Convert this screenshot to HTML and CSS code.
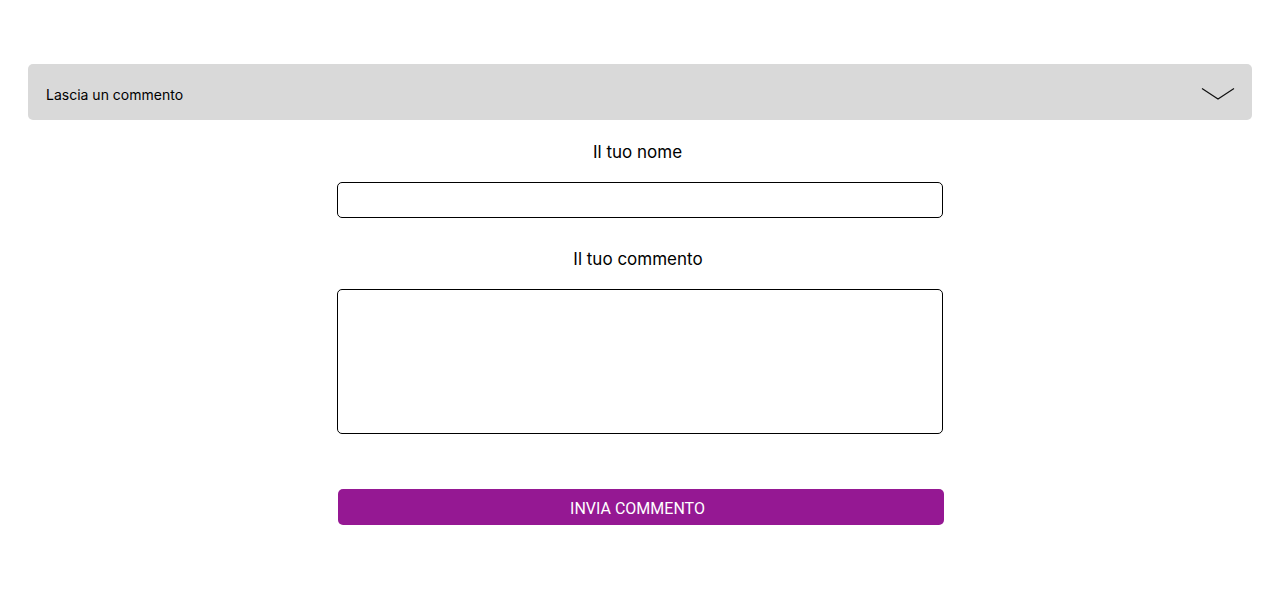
FILE: index.html
```html
<!DOCTYPE html>
<html lang="it">
<head>
<meta charset="utf-8">
<title>Lascia un commento</title>
<link rel="stylesheet" href="styles.css">
</head>
<body>
<main class="page">
  <div class="accordion">
    <span class="accordion-title">Lascia un commento</span>
    <svg class="chevron" width="34" height="14" viewBox="0 0 34 14" aria-hidden="true">
      <polyline points="1,1.5 17,12 33,1.5" fill="none" stroke="#111" stroke-width="1.2"/>
    </svg>
  </div>
  <form class="comment-form">
    <label class="field-label" for="nome">Il tuo nome</label>
    <input class="field-input" id="nome" type="text">
    <label class="field-label label-comment" for="commento">Il tuo commento</label>
    <textarea class="field-textarea" id="commento"></textarea>
    <button class="submit" type="button">INVIA COMMENTO</button>
  </form>
</main>
</body>
</html>
```
FILE: styles.css
```css
* { box-sizing: border-box; }
html, body { margin: 0; padding: 0; background: #fff; }
body { font-family: Inter, "Noto Sans", sans-serif; color: #000; }
.page { padding: 64px 28px 0; }
.accordion {
  height: 56px;
  background: #d9d9d9;
  border-radius: 5px;
  display: flex;
  align-items: center;
  justify-content: space-between;
  padding: 0 17px 0 18px;
}
.accordion-title { font-size: 14px; padding-top: 4px; }
.chevron { display: block; margin-top: 3px; }
.comment-form {
  width: 606px;
  margin: 0 auto;
  display: flex;
  flex-direction: column;
  align-items: stretch;
  padding-top: 22px;
}
.field-label {
  font-size: 17px;
  text-align: center;
  line-height: 20px;
  display: block;
  margin-bottom: 20px;
  padding-right: 5px;
}
.label-comment { margin-top: 31px; padding-right: 4px; }
.field-input {
  height: 36px;
  border: 1px solid #000;
  border-radius: 5px;
  font: inherit;
  background: #fff;
  padding: 0 8px;
}
.field-textarea {
  height: 145px;
  border: 1px solid #000;
  border-radius: 5px;
  font: inherit;
  resize: none;
  background: #fff;
  padding: 8px;
}
.submit {
  margin: 55px 0 0 1px;
  height: 36px;
  width: 606px;
  background: #951893;
  color: #fff;
  border: none;
  border-radius: 5px;
  font-family: Roboto, sans-serif;
  font-size: 16px;
  padding: 3px 7px 0 0;
}
```
